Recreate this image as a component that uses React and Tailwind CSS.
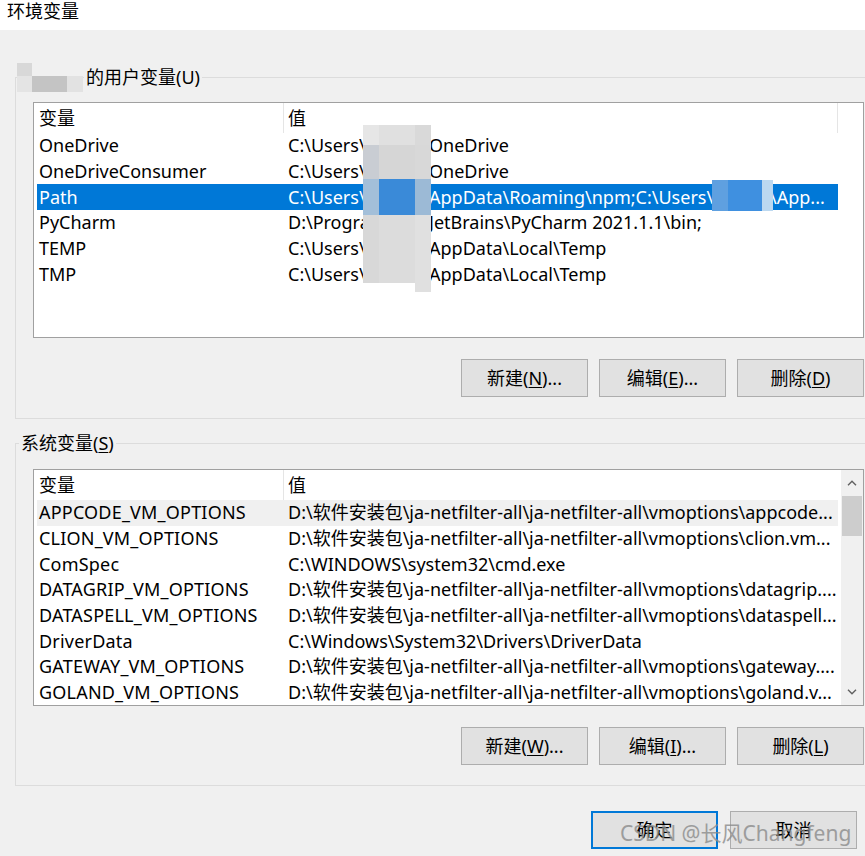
import React from 'react';

const font = { fontFamily: '"Noto Sans", "Noto Sans CJK SC", sans-serif' };

const userVars = [
  { name: 'OneDrive', a: 'C:\\Users\\', b: 'OneDrive' },
  { name: 'OneDriveConsumer', a: 'C:\\Users\\', b: 'OneDrive' },
  { name: 'Path', a: 'C:\\Users\\', b: 'AppData\\Roaming\\npm;C:\\Users\\', c: '\\App...', selected: true },
  { name: 'PyCharm', a: 'D:\\Progra', b: 'JetBrains\\PyCharm 2021.1.1\\bin;' },
  { name: 'TEMP', a: 'C:\\Users\\', b: 'AppData\\Local\\Temp' },
  { name: 'TMP', a: 'C:\\Users\\', b: 'AppData\\Local\\Temp' },
];

const sysVars = [
  { name: 'APPCODE_VM_OPTIONS', value: 'D:\\软件安装包\\ja-netfilter-all\\ja-netfilter-all\\vmoptions\\appcode...', hover: true },
  { name: 'CLION_VM_OPTIONS', value: 'D:\\软件安装包\\ja-netfilter-all\\ja-netfilter-all\\vmoptions\\clion.vm...' },
  { name: 'ComSpec', value: 'C:\\WINDOWS\\system32\\cmd.exe' },
  { name: 'DATAGRIP_VM_OPTIONS', value: 'D:\\软件安装包\\ja-netfilter-all\\ja-netfilter-all\\vmoptions\\datagrip....' },
  { name: 'DATASPELL_VM_OPTIONS', value: 'D:\\软件安装包\\ja-netfilter-all\\ja-netfilter-all\\vmoptions\\dataspell...' },
  { name: 'DriverData', value: 'C:\\Windows\\System32\\Drivers\\DriverData' },
  { name: 'GATEWAY_VM_OPTIONS', value: 'D:\\软件安装包\\ja-netfilter-all\\ja-netfilter-all\\vmoptions\\gateway....' },
  { name: 'GOLAND_VM_OPTIONS', value: 'D:\\软件安装包\\ja-netfilter-all\\ja-netfilter-all\\vmoptions\\goland.v...' },
];

// mosaic patches covering the user name
const patches = [
  { l: 363, t: 125, w: 16, h: 20, c: 'bg-[#e6e6e6]' },
  { l: 379, t: 125, w: 36, h: 20, c: 'bg-[#e0e0e0]' },
  { l: 415, t: 125, w: 16, h: 20, c: 'bg-[#d9d9d9]' },
  { l: 363, t: 145, w: 16, h: 34, c: 'bg-[#c9cdd3]' },
  { l: 379, t: 145, w: 36, h: 34, c: 'bg-[#d6d6d6]' },
  { l: 415, t: 145, w: 16, h: 34, c: 'bg-[#d8d8d8]' },
  { l: 363, t: 179, w: 16, h: 36, c: 'bg-[#a3bfd9]' },
  { l: 379, t: 179, w: 36, h: 36, c: 'bg-[#3a8ad8]' },
  { l: 415, t: 179, w: 16, h: 36, c: 'bg-[#9cbad6]' },
  { l: 363, t: 215, w: 16, h: 68, c: 'bg-[#d8d8d8]' },
  { l: 379, t: 215, w: 36, h: 68, c: 'bg-[#dcdcdc]' },
  { l: 415, t: 215, w: 16, h: 77, c: 'bg-[#e0e0e0]' },
  { l: 712, t: 180, w: 16, h: 31, c: 'bg-[#5fa0e0]' },
  { l: 728, t: 180, w: 34, h: 31, c: 'bg-[#3f90e0]' },
  { l: 762, t: 180, w: 11, h: 31, c: 'bg-[#bcd8f0]' },
  { l: 17, t: 63, w: 15, h: 13, c: 'bg-[#d8d8d8]' },
  { l: 17, t: 76, w: 15, h: 16, c: 'bg-[#e4e4e4]' },
  { l: 32, t: 76, w: 35, h: 16, c: 'bg-[#c4c4c4]' },
  { l: 67, t: 76, w: 16, h: 16, c: 'bg-[#e2e2e2]' },
];

const U = ({ children }) => <span className="underline underline-offset-2">{children}</span>;

const Button = ({ children, primary }) => (
  <button
    className={`h-[38px] w-[127px] bg-[#e1e1e1] text-[18px] text-black ${
      primary ? 'border-2 border-[#0078d7]' : 'border border-[#adadad]'
    }`}
  >
    {children}
  </button>
);

const Header = ({ endLine }) => (
  <div className="mx-[3px] flex h-[30px] w-[801px] items-center">
    <div className="h-full w-[246px] shrink-0 pl-[2px] leading-[30px]">变量</div>
    <div className="h-full w-px bg-[#e5e5e5]" />
    <div className="h-full flex-1 pl-[4px] leading-[30px]">值</div>
    {endLine && <div className="h-full w-px bg-[#e5e5e5]" />}
  </div>
);

const UserRow = ({ v }) => (
  <div className={`mx-[3px] flex h-[25.67px] w-[801px] items-center whitespace-nowrap ${v.selected ? 'bg-[#0078d7] text-white' : ''}`}>
    <div className="w-[248px] shrink-0 pl-[2px]">{v.name}</div>
    <div className="w-[144px] shrink-0 overflow-hidden pl-[3px]">{v.a}</div>
    <div className={`${v.c ? 'w-[341px]' : ''} shrink-0 overflow-hidden`}>{v.b}</div>
    {v.c && <div>{v.c}</div>}
  </div>
);

const SysRow = ({ v }) => (
  <div className={`mx-[3px] flex h-[25.67px] w-[801px] items-center whitespace-nowrap ${v.hover ? 'bg-[#f0f0f0]' : ''}`}>
    <div className="w-[248px] shrink-0 pl-[2px] tracking-[0.2px]">{v.name}</div>
    <div className="flex-1 overflow-hidden pl-[3px]">{v.value}</div>
  </div>
);

const Chevron = ({ up }) => (
  <svg width="10" height="6" viewBox="0 0 10 6" fill="none" stroke="#606060" strokeWidth="1.4">
    <path d={up ? 'M1 5.2 L5 1.2 L9 5.2' : 'M1 0.8 L5 4.8 L9 0.8'} />
  </svg>
);

const GroupBox = ({ label, labelOffset, children, className }) => (
  <div className={`relative ml-[15px] border-y border-l border-[#dcdcdc] pl-[17px] ${className}`}>
    <div className={`absolute top-[-13px] bg-[#f0f0f0] px-[2px] leading-[24px] ${labelOffset}`}>{label}</div>
    {children}
  </div>
);

const ButtonRow = ({ children }) => (
  <div className="mt-[21px] flex justify-end gap-[11px] pr-[1px]">{children}</div>
);

export default function App() {
  return (
    <div className="relative h-[856px] w-[865px] overflow-hidden bg-[#f0f0f0] text-[18px] text-black" style={font}>
      <div className="h-[30px] bg-white pl-[7px] leading-[22px]">环境变量</div>

      <GroupBox label="的用户变量(U)" labelOffset="left-[68px]" className="mt-[47px] pb-[21px] pt-[24px]">
        <div className="h-[236px] w-[831px] border border-[#a0a0a0] bg-white">
          <Header endLine />
          {userVars.map((v) => <UserRow key={v.name} v={v} />)}
        </div>
        <ButtonRow>
          <Button>新建(<U>N</U>)...</Button>
          <Button>编辑(<U>E</U>)...</Button>
          <Button>删除(<U>D</U>)</Button>
        </ButtonRow>
      </GroupBox>

      <GroupBox label={<>系统变量(<U>S</U>)</>} labelOffset="left-[3px]" className="mt-[24px] pb-[20px] pt-[25px]">
        <div className="relative flex h-[237px] w-[831px] border border-[#a0a0a0] bg-white">
          <div className="flex-1">
            <Header />
            {sysVars.map((v) => <SysRow key={v.name} v={v} />)}
          </div>
          <div className="flex w-[24px] flex-col bg-[#f0f0f0]">
            <div className="flex h-[26px] items-center justify-center"><Chevron up /></div>
            <div className="mx-[1px] h-[40px] bg-[#cdcdcd]" />
            <div className="flex-1" />
            <div className="flex h-[26px] items-center justify-center"><Chevron /></div>
          </div>
        </div>
        <ButtonRow>
          <Button>新建(<U>W</U>)...</Button>
          <Button>编辑(<U>I</U>)...</Button>
          <Button>删除(<U>L</U>)</Button>
        </ButtonRow>
      </GroupBox>

      <div className="mt-[25px] flex justify-end gap-[12px] pr-[8px]">
        <Button primary>确定</Button>
        <Button>取消</Button>
      </div>

      {patches.map((p, i) => (
        <div key={i} className={`absolute ${p.c}`} style={{ left: p.l, top: p.t, width: p.w, height: p.h }} />
      ))}

      <div className="pointer-events-none absolute left-[620px] top-[818px] text-[21px] leading-[30px] text-[#8c8c8c] opacity-80">
        CSDN @长风Changfeng
      </div>
    </div>
  );
}
